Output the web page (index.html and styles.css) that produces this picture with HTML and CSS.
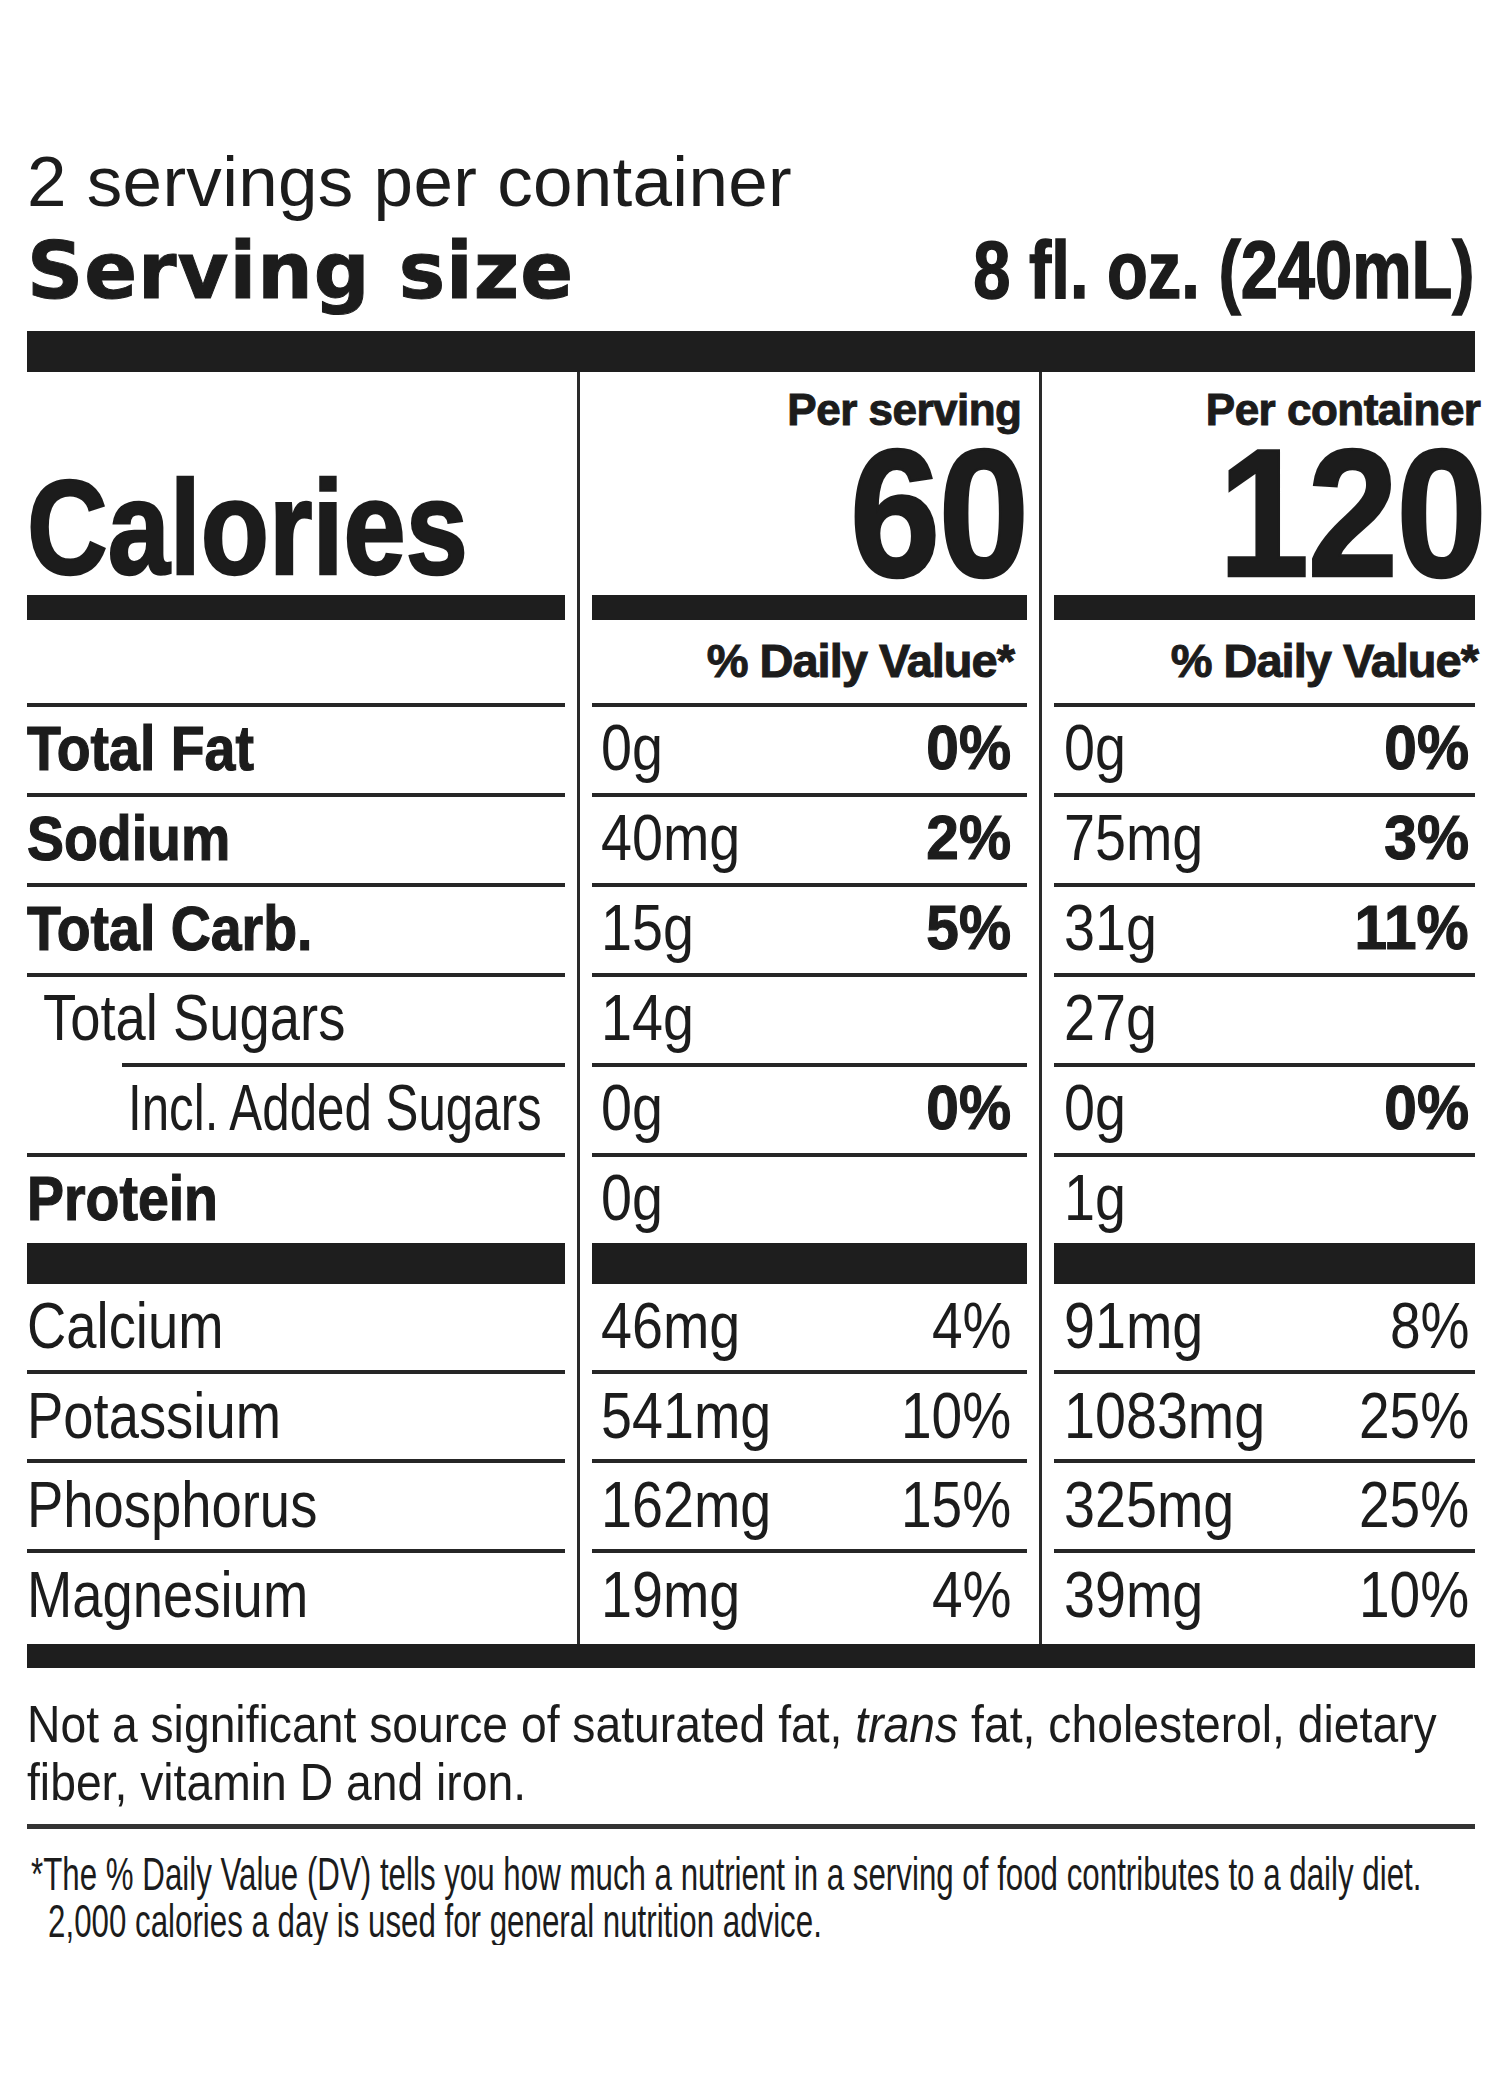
FILE: index.html
```html
<!DOCTYPE html>
<html lang="en">
<head>
<meta charset="utf-8">
<title>Nutrition Facts</title>
<link rel="stylesheet" href="styles.css">
</head>
<body>
<div class="label">
  <p class="servings">2 servings per container</p>
  <div class="size-row">
    <span class="size-label">Serving size</span>
    <span class="size-value">8 fl. oz. (240mL)</span>
  </div>
  <div class="bar-top"></div>

  <div class="facts">
    <div class="divider d1"></div>
    <div class="divider d2"></div>

    <div class="hd-label"><span class="calories">Calories</span></div>
    <div class="hd-val c2"><span class="per">Per serving</span><span class="kcal">60</span></div>
    <div class="hd-val c3"><span class="per">Per container</span><span class="kcal">120</span></div>

    <div class="bar-cell"></div><div class="bar-cell"></div><div class="bar-cell"></div>

    <div class="dv-cell"></div>
    <div class="dv-cell c2">% Daily Value*</div>
    <div class="dv-cell c3">% Daily Value*</div>

    <div class="row lbl"><span class="b nm">Total Fat</span></div>
    <div class="row val c2"><span class="v">0g</span><span class="b pc">0%</span></div>
    <div class="row val c3"><span class="v">0g</span><span class="b pc">0%</span></div>

    <div class="row lbl"><span class="b nm">Sodium</span></div>
    <div class="row val c2"><span class="v">40mg</span><span class="b pc">2%</span></div>
    <div class="row val c3"><span class="v">75mg</span><span class="b pc">3%</span></div>

    <div class="row lbl"><span class="b nm">Total Carb.</span></div>
    <div class="row val c2"><span class="v">15g</span><span class="b pc">5%</span></div>
    <div class="row val c3"><span class="v">31g</span><span class="b pc">11%</span></div>

    <div class="row lbl sub1"><span class="nm">Total Sugars</span></div>
    <div class="row val c2"><span class="v">14g</span></div>
    <div class="row val c3"><span class="v">27g</span></div>

    <div class="row lbl sub2"><span class="nm tight">Incl. Added Sugars</span></div>
    <div class="row val c2"><span class="v">0g</span><span class="b pc">0%</span></div>
    <div class="row val c3"><span class="v">0g</span><span class="b pc">0%</span></div>

    <div class="row lbl"><span class="b nm">Protein</span></div>
    <div class="row val c2"><span class="v">0g</span></div>
    <div class="row val c3"><span class="v">1g</span></div>

    <div class="thick-cell"></div><div class="thick-cell"></div><div class="thick-cell"></div>

    <div class="mrow m1 lbl"><span class="nm">Calcium</span></div>
    <div class="mrow m1 val c2"><span class="v">46mg</span><span class="pc">4%</span></div>
    <div class="mrow m1 val c3"><span class="v">91mg</span><span class="pc">8%</span></div>

    <div class="mrow m2 lbl"><span class="nm">Potassium</span></div>
    <div class="mrow m2 val c2"><span class="v">541mg</span><span class="pc">10%</span></div>
    <div class="mrow m2 val c3"><span class="v">1083mg</span><span class="pc">25%</span></div>

    <div class="mrow m3 lbl"><span class="nm">Phosphorus</span></div>
    <div class="mrow m3 val c2"><span class="v">162mg</span><span class="pc">15%</span></div>
    <div class="mrow m3 val c3"><span class="v">325mg</span><span class="pc">25%</span></div>

    <div class="mrow m4 lbl"><span class="nm">Magnesium</span></div>
    <div class="mrow m4 val c2"><span class="v">19mg</span><span class="pc">4%</span></div>
    <div class="mrow m4 val c3"><span class="v">39mg</span><span class="pc">10%</span></div>
  </div>

  <div class="bar-bottom"></div>

  <p class="note">Not a significant source of saturated fat, <em>trans</em> fat, cholesterol, dietary<br>fiber, vitamin D and iron.</p>
  <div class="rule"></div>
  <p class="footnote"><span class="fl1">*The % Daily Value (DV) tells you how much a nutrient in a serving of food contributes to a daily diet.</span><span class="fl2">2,000 calories a day is used for general nutrition advice.</span></p>
</div>
</body>
</html>
```

FILE: styles.css
```css
* {
  box-sizing: border-box;
  margin: 0;
  padding: 0;
}

body {
  background: #ffffff;
  color: #1c1c1c;
  font-family: "Liberation Sans", Arial, sans-serif;
}

.label {
  width: 1448px;
  margin-left: 27px;
  padding-top: 146px;
}

.servings {
  font-size: 71px;
  line-height: 71px;
  letter-spacing: 0.3px;
}

.size-row {
  display: flex;
  justify-content: space-between;
  align-items: baseline;
  margin-top: 13px;
  line-height: 80px;
}

.size-label {
  font-family: "DejaVu Sans", sans-serif;
  font-weight: 700;
  font-size: 78px;
  letter-spacing: 1px;
  -webkit-text-stroke: 1px #1c1c1c;
}

.size-value {
  display: inline-block;
  white-space: nowrap;
  font-weight: 700;
  font-size: 81px;
  transform: scaleX(0.825);
  transform-origin: right center;
  -webkit-text-stroke: 1.5px #1c1c1c;
}

.bar-top {
  height: 41px;
  margin-top: 20px;
  background: #1e1e1e;
}

.facts {
  display: grid;
  grid-template-columns: 538px 27px 435px 27px 421px;
}

.divider {
  grid-row: 1 / span 14;
  justify-self: center;
  width: 3px;
  background: #2a2a2a;
}

.d1 { grid-column: 2; }
.d2 { grid-column: 4; }

.hd-label {
  height: 223px;
  display: flex;
  align-items: flex-end;
}

.calories {
  white-space: nowrap;
  font-weight: 700;
  font-size: 133px;
  line-height: 1;
  transform: scaleX(0.84);
  transform-origin: left bottom;
  -webkit-text-stroke: 2.5px #1c1c1c;
}

.hd-val {
  height: 223px;
  display: flex;
  flex-direction: column;
  justify-content: flex-end;
  align-items: flex-end;
}

.hd-val.c2 { padding-right: 6px; }
.hd-val.c3 { margin-right: -5px; }

.per {
  font-weight: 700;
  font-size: 44px;
  line-height: 1;
  letter-spacing: -0.5px;
  margin-right: -0.5px;
  -webkit-text-stroke: 1px #1c1c1c;
}

.kcal {
  display: inline-block;
  white-space: nowrap;
  font-weight: 700;
  font-size: 181px;
  line-height: 0.9;
  letter-spacing: -2px;
  transform: scaleX(0.9);
  transform-origin: right bottom;
  -webkit-text-stroke: 2.5px #1c1c1c;
}

.hd-val.c2 .kcal { margin-right: -6px; }
.hd-val.c3 .kcal { margin-right: -5px; }

.bar-cell {
  height: 25px;
  background: #1e1e1e;
}

.dv-cell {
  height: 83px;
  padding-top: 17px;
  text-align: right;
  font-weight: 700;
  font-size: 47px;
  line-height: 1;
  letter-spacing: -1px;
  -webkit-text-stroke: 1px #1c1c1c;
}

.dv-cell.c2 { padding-right: 13px; }
.dv-cell.c3 { margin-right: -3px; }

.row,
.mrow {
  font-size: 64px;
  line-height: 1;
  white-space: nowrap;
}

.row {
  height: 90px;
  padding-top: 9px;
  border-top: 4px solid #262626;
}

.mrow {
  padding-top: 10px;
  border-top: 4px solid #262626;
}

.mrow.m1 { height: 86px; border-top: 0; }
.mrow.m2 { height: 89px; }
.mrow.m3 { height: 90px; }
.mrow.m4 { height: 95px; }

.nm,
.v,
.pc {
  display: inline-block;
  white-space: nowrap;
}

.nm {
  transform: scaleX(0.85);
  transform-origin: left center;
}

.nm.tight { transform: scaleX(0.77); }

.v {
  transform: scaleX(0.87);
  transform-origin: left center;
}

.pc {
  transform: scaleX(0.86);
  transform-origin: right center;
}

.b {
  font-weight: 700;
  font-size: 63px;
  -webkit-text-stroke: 1.2px #1c1c1c;
}

.b.nm { transform: scaleX(0.88); }
.b.pc { transform: scaleX(0.93); }

.lbl.sub1 { padding-left: 16px; }
.lbl.sub2 { margin-left: 95px; padding-left: 6px; }

.val {
  display: flex;
  justify-content: space-between;
}

.val.c2 { padding-left: 9px; padding-right: 16px; }
.val.c3 { padding-left: 10px; padding-right: 6px; }

.thick-cell {
  height: 41px;
  background: #1e1e1e;
}

.bar-bottom {
  height: 24px;
  background: #1e1e1e;
}

.note {
  margin-top: 27px;
  font-size: 52px;
  line-height: 58px;
  white-space: nowrap;
  transform: scaleX(0.89);
  transform-origin: left top;
}

.rule {
  margin-top: 13px;
  height: 5px;
  background: #333333;
}

.footnote {
  margin-top: 22px;
  font-size: 46px;
  line-height: 47px;
  white-space: nowrap;
  transform: scaleX(0.68);
  transform-origin: left top;
}

.fl1, .fl2 { display: block; }
.fl1 { padding-left: 6px; }
.fl2 { padding-left: 31px; }
```
